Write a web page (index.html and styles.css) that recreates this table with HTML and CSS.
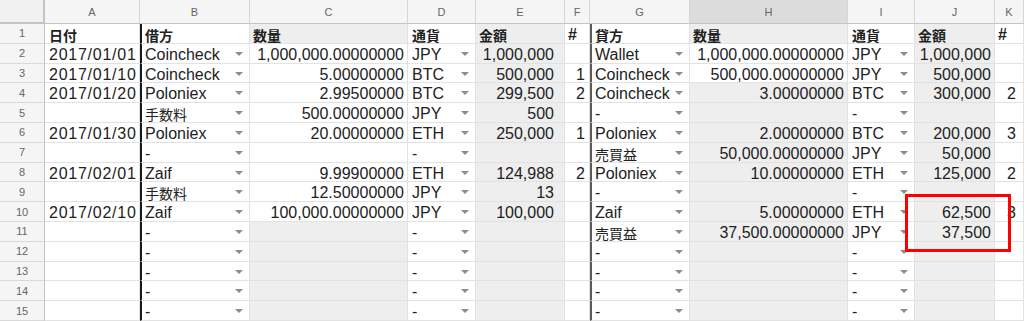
FILE: index.html
```html
<!DOCTYPE html>
<html lang="ja">
<head>
<meta charset="utf-8">
<title>Sheet</title>
<link rel="stylesheet" href="styles.css">
</head>
<body>
<div class="sheet">
  <div class="row hdr">
    <div class="corner"></div>
    <div class="ch">A</div><div class="ch">B</div><div class="ch">C</div><div class="ch">D</div><div class="ch">E</div><div class="ch">F</div>
    <div class="ch">G</div><div class="ch sel">H</div><div class="ch">I</div><div class="ch">J</div><div class="ch">K</div>
  </div>

  <div class="row">
    <div class="rh">1</div>
    <div class="c pa b"><span class="jp">日付</span></div>
    <div class="c bl b"><span class="jp">借方</span></div>
    <div class="c g b"><span class="jp">数量</span></div>
    <div class="c pa b"><span class="jp">通貨</span></div>
    <div class="c g b"><span class="jp">金額</span></div>
    <div class="c b">#</div>
    <div class="c bl2 b"><span class="jp">貸方</span></div>
    <div class="c g b"><span class="jp">数量</span></div>
    <div class="c pa b"><span class="jp">通貨</span></div>
    <div class="c g b"><span class="jp">金額</span></div>
    <div class="c b">#</div>
  </div>

  <div class="row">
    <div class="rh">2</div>
    <div class="c pa dt">2017/01/01</div>
    <div class="c bl dd"><span>Coincheck</span></div>
    <div class="c r">1,000,000.00000000</div>
    <div class="c pa dd"><span>JPY</span></div>
    <div class="c g r pe">1,000,000</div>
    <div class="c r pf"></div>
    <div class="c bl2 dd"><span>Wallet</span></div>
    <div class="c r">1,000,000.00000000</div>
    <div class="c pa dd"><span>JPY</span></div>
    <div class="c g r">1,000,000</div>
    <div class="c r pk"></div>
  </div>

  <div class="row">
    <div class="rh">3</div>
    <div class="c pa dt">2017/01/10</div>
    <div class="c bl dd"><span>Coincheck</span></div>
    <div class="c r">5.00000000</div>
    <div class="c pa dd"><span>BTC</span></div>
    <div class="c g r pe">500,000</div>
    <div class="c r pf">1</div>
    <div class="c bl2 dd"><span>Coincheck</span></div>
    <div class="c r">500,000.00000000</div>
    <div class="c pa dd"><span>JPY</span></div>
    <div class="c g r">500,000</div>
    <div class="c r pk"></div>
  </div>

  <div class="row">
    <div class="rh">4</div>
    <div class="c pa dt">2017/01/20</div>
    <div class="c bl dd"><span>Poloniex</span></div>
    <div class="c r">2.99500000</div>
    <div class="c pa dd"><span>BTC</span></div>
    <div class="c g r pe">299,500</div>
    <div class="c r pf">2</div>
    <div class="c bl2 dd"><span>Coincheck</span></div>
    <div class="c g r">3.00000000</div>
    <div class="c pa dd"><span>BTC</span></div>
    <div class="c g r">300,000</div>
    <div class="c r pk">2</div>
  </div>

  <div class="row">
    <div class="rh">5</div>
    <div class="c pa"></div>
    <div class="c bl dd"><span class="jp">手数料</span></div>
    <div class="c r">500.00000000</div>
    <div class="c pa dd"><span>JPY</span></div>
    <div class="c g r pe">500</div>
    <div class="c r pf"></div>
    <div class="c bl2 dd"><span>-</span></div>
    <div class="c g r"></div>
    <div class="c pa dd"><span>-</span></div>
    <div class="c g r"></div>
    <div class="c r pk"></div>
  </div>

  <div class="row">
    <div class="rh">6</div>
    <div class="c pa dt">2017/01/30</div>
    <div class="c bl dd"><span>Poloniex</span></div>
    <div class="c r">20.00000000</div>
    <div class="c pa dd"><span>ETH</span></div>
    <div class="c g r pe">250,000</div>
    <div class="c r pf">1</div>
    <div class="c bl2 dd"><span>Poloniex</span></div>
    <div class="c g r">2.00000000</div>
    <div class="c pa dd"><span>BTC</span></div>
    <div class="c g r">200,000</div>
    <div class="c r pk">3</div>
  </div>

  <div class="row">
    <div class="rh">7</div>
    <div class="c pa"></div>
    <div class="c bl dd"><span>-</span></div>
    <div class="c r"></div>
    <div class="c pa dd"><span>-</span></div>
    <div class="c g r pe"></div>
    <div class="c r pf"></div>
    <div class="c bl2 dd"><span class="jp">売買益</span></div>
    <div class="c g r">50,000.00000000</div>
    <div class="c pa dd"><span>JPY</span></div>
    <div class="c g r">50,000</div>
    <div class="c r pk"></div>
  </div>

  <div class="row">
    <div class="rh">8</div>
    <div class="c pa dt">2017/02/01</div>
    <div class="c bl dd"><span>Zaif</span></div>
    <div class="c r">9.99900000</div>
    <div class="c pa dd"><span>ETH</span></div>
    <div class="c g r pe">124,988</div>
    <div class="c r pf">2</div>
    <div class="c bl2 dd"><span>Poloniex</span></div>
    <div class="c g r">10.00000000</div>
    <div class="c pa dd"><span>ETH</span></div>
    <div class="c g r">125,000</div>
    <div class="c r pk">2</div>
  </div>

  <div class="row">
    <div class="rh">9</div>
    <div class="c pa"></div>
    <div class="c bl dd"><span class="jp">手数料</span></div>
    <div class="c r">12.50000000</div>
    <div class="c pa dd"><span>JPY</span></div>
    <div class="c g r pe">13</div>
    <div class="c r pf"></div>
    <div class="c bl2 dd"><span>-</span></div>
    <div class="c g r"></div>
    <div class="c pa dd"><span>-</span></div>
    <div class="c g r"></div>
    <div class="c r pk"></div>
  </div>

  <div class="row">
    <div class="rh">10</div>
    <div class="c pa dt">2017/02/10</div>
    <div class="c bl dd"><span>Zaif</span></div>
    <div class="c r">100,000.00000000</div>
    <div class="c pa dd"><span>JPY</span></div>
    <div class="c g r pe">100,000</div>
    <div class="c r pf"></div>
    <div class="c bl2 dd"><span>Zaif</span></div>
    <div class="c g r">5.00000000</div>
    <div class="c pa dd"><span>ETH</span></div>
    <div class="c g r">62,500</div>
    <div class="c r pk">3</div>
  </div>

  <div class="row">
    <div class="rh">11</div>
    <div class="c pa"></div>
    <div class="c bl dd"><span>-</span></div>
    <div class="c g r"></div>
    <div class="c pa dd"><span>-</span></div>
    <div class="c g r pe"></div>
    <div class="c r pf"></div>
    <div class="c bl2 dd"><span class="jp">売買益</span></div>
    <div class="c g r">37,500.00000000</div>
    <div class="c pa dd"><span>JPY</span></div>
    <div class="c g r">37,500</div>
    <div class="c r pk"></div>
  </div>

  <div class="row">
    <div class="rh">12</div>
    <div class="c pa"></div>
    <div class="c bl dd"><span>-</span></div>
    <div class="c g r"></div>
    <div class="c pa dd"><span>-</span></div>
    <div class="c g r pe"></div>
    <div class="c r pf"></div>
    <div class="c bl2 dd"><span>-</span></div>
    <div class="c g r"></div>
    <div class="c pa dd"><span>-</span></div>
    <div class="c g r"></div>
    <div class="c r pk"></div>
  </div>

  <div class="row">
    <div class="rh">13</div>
    <div class="c pa"></div>
    <div class="c bl dd"><span>-</span></div>
    <div class="c g r"></div>
    <div class="c pa dd"><span>-</span></div>
    <div class="c g r pe"></div>
    <div class="c r pf"></div>
    <div class="c bl2 dd"><span>-</span></div>
    <div class="c g r"></div>
    <div class="c pa dd"><span>-</span></div>
    <div class="c g r"></div>
    <div class="c r pk"></div>
  </div>

  <div class="row">
    <div class="rh">14</div>
    <div class="c pa"></div>
    <div class="c bl dd"><span>-</span></div>
    <div class="c g r"></div>
    <div class="c pa dd"><span>-</span></div>
    <div class="c g r pe"></div>
    <div class="c r pf"></div>
    <div class="c bl2 dd"><span>-</span></div>
    <div class="c g r"></div>
    <div class="c pa dd"><span>-</span></div>
    <div class="c g r"></div>
    <div class="c r pk"></div>
  </div>

  <div class="row">
    <div class="rh">15</div>
    <div class="c pa"></div>
    <div class="c bl dd"><span>-</span></div>
    <div class="c g r"></div>
    <div class="c pa dd"><span>-</span></div>
    <div class="c g r pe"></div>
    <div class="c r pf"></div>
    <div class="c bl2 dd"><span>-</span></div>
    <div class="c g r"></div>
    <div class="c pa dd"><span>-</span></div>
    <div class="c g r"></div>
    <div class="c r pk"></div>
  </div>

  <div class="mark"></div>
</div>
</body>
</html>
```

FILE: styles.css
```css
html, body {
  margin: 0;
  padding: 0;
  background: #ffffff;
  overflow: hidden;
}

.sheet {
  position: relative;
  width: 1024px;
  height: 321px;
  display: flex;
  flex-direction: column;
  font-family: "Liberation Sans", Arial, "Noto Sans CJK JP", sans-serif;
  color: #222222;
}

.row {
  display: grid;
  grid-template-columns: 45px 95px 110px 158px 68px 89px 25px 100px 158px 67px 80px 29px;
  grid-template-rows: 19.8px;
  height: 19.8px;
  flex: none;
}

.row.hdr {
  grid-template-rows: 24px;
  height: 24px;
}

.corner {
  background: #f1f1f1;
  border-right: 2px solid #c4c4c4;
  border-bottom: 2px solid #c4c4c4;
  box-sizing: border-box;
}

.ch {
  box-sizing: border-box;
  background: #f5f5f5;
  border-right: 1px solid #d6d6d6;
  border-bottom: 1px solid #c4c4c4;
  font-size: 11px;
  color: #666666;
  display: flex;
  align-items: center;
  justify-content: center;
  padding-top: 1px;
}

.ch.sel {
  background: #dcdcdc;
}

.rh {
  box-sizing: border-box;
  background: #f5f5f5;
  border-right: 1px solid #c4c4c4;
  border-bottom: 1px solid #d9d9d9;
  font-size: 11px;
  color: #666666;
  display: flex;
  align-items: center;
  justify-content: center;
}

.c {
  box-sizing: border-box;
  min-height: 0;
  border-right: 1px solid #e2e2e2;
  border-bottom: 1px solid #e2e2e2;
  font-size: 16px;
  line-height: 16px;
  padding: 3px 3px 0 3px;
  white-space: nowrap;
  background: #ffffff;
}

.c.pa {
  padding-left: 4px;
}

.c.dt {
  letter-spacing: 0.75px;
}

.c.g {
  background: #eeeeee;
}

.c.r {
  text-align: right;
}

.c.pe {
  padding-right: 10px;
}

.c.pf {
  padding-right: 4px;
}

.c.pk {
  padding-right: 7px;
}

.c.b {
  font-weight: bold;
}

.c.bl {
  border-left: 2px solid #1a1a1a;
}

.c.bl2 {
  border-left: 2px solid #5a5a5a;
}

.jp {
  font-family: "Noto Sans CJK JP", sans-serif;
  font-size: 14px;
}

.dd {
  display: flex;
  justify-content: space-between;
  align-items: flex-start;
}

.dd::after {
  content: "";
  flex: none;
  width: 0;
  height: 0;
  margin-top: 5px;
  margin-right: 3px;
  border-left: 4px solid transparent;
  border-right: 4px solid transparent;
  border-top: 4px solid #8c8c8c;
}

.mark {
  position: absolute;
  left: 905px;
  top: 194px;
  width: 106px;
  height: 58px;
  box-sizing: border-box;
  border: 3px solid #ff0000;
}
```
